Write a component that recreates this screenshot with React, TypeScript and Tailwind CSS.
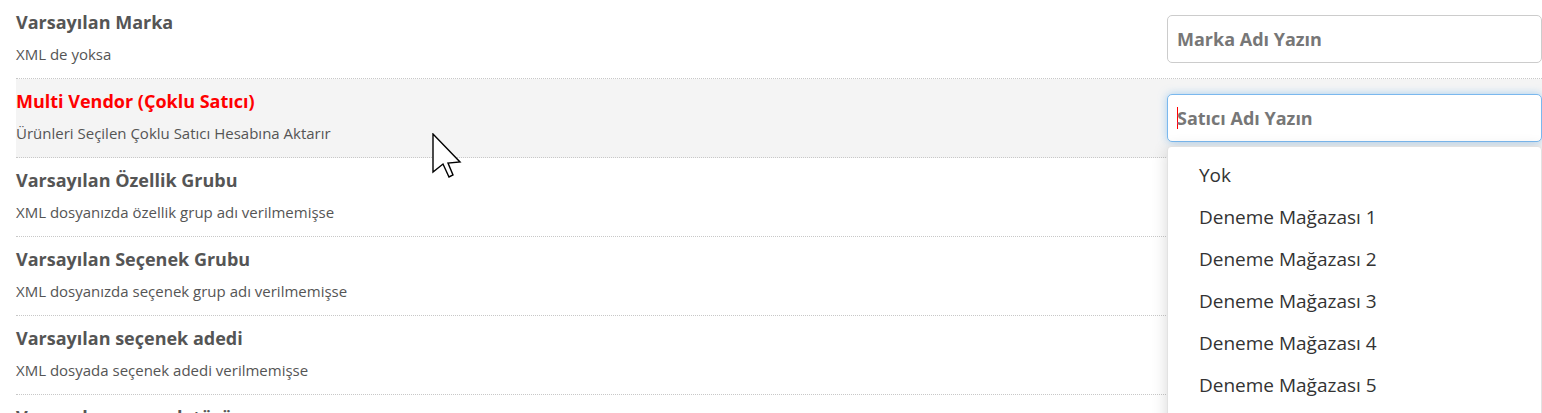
const font = { fontFamily: '"Open Sans", "Noto Sans", Arial, sans-serif' };

type Row = {
  title: string;
  desc: string;
  placeholder: string;
  active?: boolean;
};

const rows: Row[] = [
  { title: "Varsayılan Marka", desc: "XML de yoksa", placeholder: "Marka Adı Yazın" },
  {
    title: "Multi Vendor (Çoklu Satıcı)",
    desc: "Ürünleri Seçilen Çoklu Satıcı Hesabına Aktarır",
    placeholder: "Satıcı Adı Yazın",
    active: true,
  },
  { title: "Varsayılan Özellik Grubu", desc: "XML dosyanızda özellik grup adı verilmemişse", placeholder: "Özellik Grubu Yazın" },
  { title: "Varsayılan Seçenek Grubu", desc: "XML dosyanızda seçenek grup adı verilmemişse", placeholder: "Seçenek Grubu Yazın" },
  { title: "Varsayılan seçenek adedi", desc: "XML dosyada seçenek adedi verilmemişse", placeholder: "Adet Yazın" },
  { title: "Varsayılan seçenek türü", desc: "XML dosyada seçenek türü verilmemişse", placeholder: "Tür Seçin" },
];

const vendors = [
  "Yok",
  "Deneme Mağazası 1",
  "Deneme Mağazası 2",
  "Deneme Mağazası 3",
  "Deneme Mağazası 4",
  "Deneme Mağazası 5",
];

function Cursor() {
  return (
    <svg
      className="absolute left-[432px] top-[133px] pointer-events-none"
      width="30"
      height="46"
      viewBox="-1 -1 30 46"
    >
      <path
        d="M0 0 L0 38 L10 30 L16 43 L20 41 L15 29 L27 28 Z"
        fill="#fff"
        stroke="#000"
        strokeWidth="1.4"
        strokeLinejoin="miter"
      />
    </svg>
  );
}

export default function App() {
  return (
    <div className="relative w-[1542px] h-[413px] overflow-hidden bg-white" style={font}>
      <div className="flex flex-col pl-4">
        {rows.map((row) => (
          <div
            key={row.title}
            className={`flex justify-between items-start h-[79px] shrink-0 border-b border-dotted border-[#c8c8c8] ${
              row.active ? "bg-[#f4f4f4]" : ""
            }`}
          >
            <div className="flex flex-col pt-[10px]">
              <h3
                className={`text-[18px] leading-[24px] font-bold ${
                  row.active ? "text-[#ff0000]" : "text-[#555555]"
                }`}
              >
                {row.title}
              </h3>
              <span className="mt-[10px] text-[15px] leading-[20px] text-[#555555]">{row.desc}</span>
            </div>
            <div className="relative mt-[15px] w-[375px]">
              <div
                className={`flex items-center h-[48px] px-[9px] rounded-[5px] bg-white border ${
                  row.active
                    ? "border-[#7ab8ee] shadow-[0_0_8px_rgba(102,175,233,0.55)]"
                    : "border-[#cccccc]"
                }`}
              >
                {row.active && <span className="w-px h-[22px] bg-[#ff0000] -mr-px" />}
                <span className="text-[18px] font-bold text-[#777777]">{row.placeholder}</span>
              </div>
              {row.active && (
                <div className="absolute z-10 left-0 top-[52px] w-[375px] h-[300px] bg-white border border-[#e2e2e2] rounded-[4px] shadow-[0_3px_16px_rgba(0,0,0,0.16)] pt-[7px]">
                  {vendors.map((v) => (
                    <div key={v} className="h-[42px] flex items-center pl-[31px] text-[19px] text-[#333333]">
                      {v}
                    </div>
                  ))}
                </div>
              )}
            </div>
          </div>
        ))}
      </div>
      <Cursor />
    </div>
  );
}
